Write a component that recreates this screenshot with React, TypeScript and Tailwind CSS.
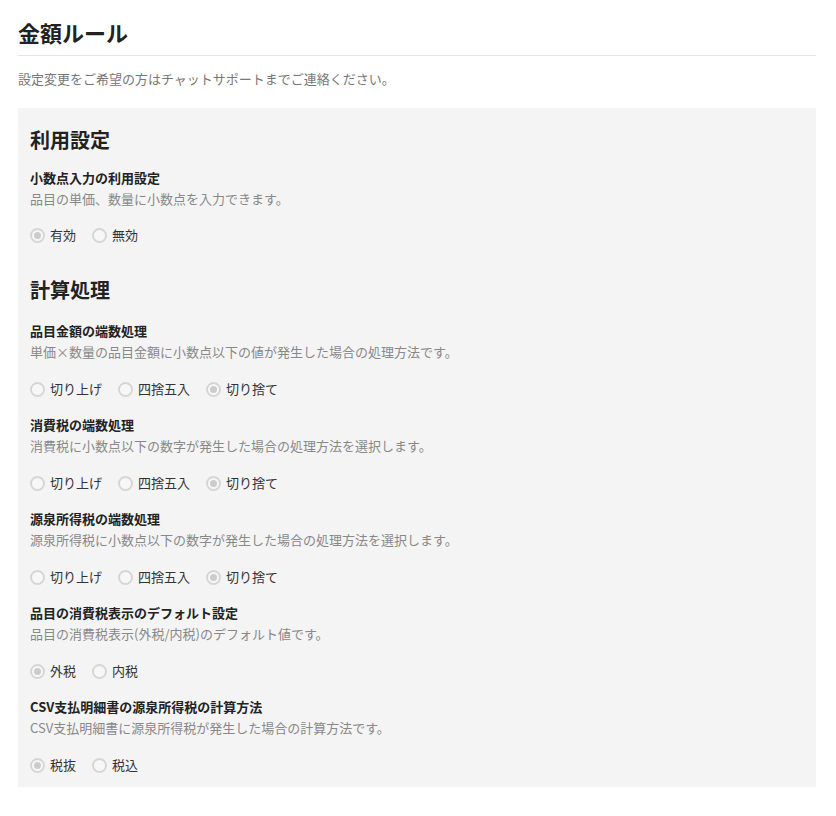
import React from "react";

type Opt = { label: string; checked?: boolean };

function Radio({ checked }: { checked?: boolean }) {
  return (
    <span className="flex h-[15px] w-[15px] shrink-0 items-center justify-center rounded-full border-2 border-[#d6d6d6] bg-[#f7f7f7]">
      {checked ? <span className="h-[7px] w-[7px] rounded-full bg-[#cccccc]" /> : null}
    </span>
  );
}

function RadioRow({ opts, className }: { opts: Opt[]; className?: string }) {
  return (
    <div className={"flex h-[20px] items-center gap-[16px] " + (className ?? "")}>
      {opts.map((o) => (
        <label key={o.label} className="flex items-center gap-[5px] text-[13px] leading-[20px] text-[#333]">
          <Radio checked={o.checked} />
          <span>{o.label}</span>
        </label>
      ))}
    </div>
  );
}

function Item({
  title,
  desc,
  opts,
  className,
  radioGap = "mt-[16px]",
}: {
  title: string;
  desc: string;
  opts: Opt[];
  className?: string;
  radioGap?: string;
}) {
  return (
    <div className={className}>
      <div className="text-[13px] font-bold leading-[21px] text-[#222]">{title}</div>
      <div className="text-[13px] leading-[22px] text-[#888]">{desc}</div>
      <RadioRow opts={opts} className={radioGap} />
    </div>
  );
}

const round: Opt[] = [{ label: "切り上げ" }, { label: "四捨五入" }, { label: "切り捨て", checked: true }];

export default function App() {
  return (
    <div
      className="min-h-[816px] bg-white pl-[18px] pr-[20px]"
      style={{ fontFamily: '"Noto Sans CJK JP", "Noto Sans", sans-serif' }}
    >
      <div className="border-b border-[#e6e6e6] pb-[7px] pt-[16px]">
        <h1 className="text-[22px] font-bold leading-[32px] text-[#222]">金額ルール</h1>
      </div>
      <p className="mt-[12px] text-[13px] leading-[22px] text-[#777]">
        設定変更をご希望の方はチャットサポートまでご連絡ください。
      </p>
      <div className="mt-[18px] bg-[#f4f4f4] px-[12px] pb-[12px] pt-[18px]">
        <h2 className="text-[20px] font-bold leading-[28px] text-[#222]">利用設定</h2>
        <Item
          className="mt-[13px]"
          radioGap="mt-[15px]"
          title="小数点入力の利用設定"
          desc="品目の単価、数量に小数点を入力できます。"
          opts={[{ label: "有効", checked: true }, { label: "無効" }]}
        />
        <h2 className="mt-[31px] text-[20px] font-bold leading-[28px] text-[#222]">計算処理</h2>
        <Item
          className="mt-[16px]"
          title="品目金額の端数処理"
          desc="単価×数量の品目金額に小数点以下の値が発生した場合の処理方法です。"
          opts={round}
        />
        <Item
          className="mt-[15px]"
          title="消費税の端数処理"
          desc="消費税に小数点以下の数字が発生した場合の処理方法を選択します。"
          opts={round}
        />
        <Item
          className="mt-[15px]"
          title="源泉所得税の端数処理"
          desc="源泉所得税に小数点以下の数字が発生した場合の処理方法を選択します。"
          opts={round}
        />
        <Item
          className="mt-[15px]"
          title="品目の消費税表示のデフォルト設定"
          desc="品目の消費税表示(外税/内税)のデフォルト値です。"
          opts={[{ label: "外税", checked: true }, { label: "内税" }]}
        />
        <Item
          className="mt-[15px]"
          title="CSV支払明細書の源泉所得税の計算方法"
          desc="CSV支払明細書に源泉所得税が発生した場合の計算方法です。"
          opts={[{ label: "税抜", checked: true }, { label: "税込" }]}
        />
      </div>
    </div>
  );
}
